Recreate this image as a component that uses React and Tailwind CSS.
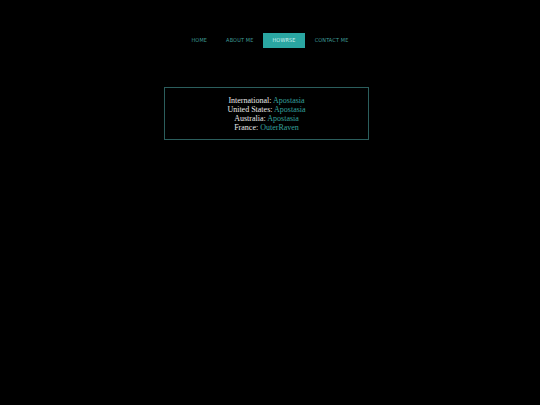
const links = [
  { label: 'HOME', active: false },
  { label: 'ABOUT ME', active: false },
  { label: 'HOWRSE', active: true },
  { label: 'CONTACT ME', active: false },
];

const accounts = [
  { region: 'International', name: 'Apostasia' },
  { region: 'United States', name: 'Apostasia' },
  { region: 'Australia', name: 'Apostasia' },
  { region: 'France', name: 'OuterRaven' },
];

export default function App() {
  return (
    <div className="w-[540px] h-[405px] bg-black overflow-hidden">
      <nav className="flex justify-center pt-[33px]">
        {links.map(l => (
          <a key={l.label} href="#"
            className={`h-[15px] px-[9.5px] flex items-center text-[5.5px] tracking-[0.15px] font-['DejaVu_Sans_Condensed','DejaVu_Sans',sans-serif] ${l.active ? 'bg-[#2aa6a2] text-[#d2f2f0]' : 'text-[#3f9c98]'}`}>
            {l.label}
          </a>
        ))}
      </nav>

      <div className="ml-[164px] mt-[39px] w-[205px] h-[53px] border border-[#2b5e5d] pt-[8px] text-center text-[8px] leading-[9px] text-[#e8e8e8] font-['Liberation_Serif',serif]">
        {accounts.map(a => (
          <p key={a.region}>
            {a.region}: <a href="#" className="text-[#35a09c]">{a.name}</a>
          </p>
        ))}
      </div>
    </div>
  );
}
